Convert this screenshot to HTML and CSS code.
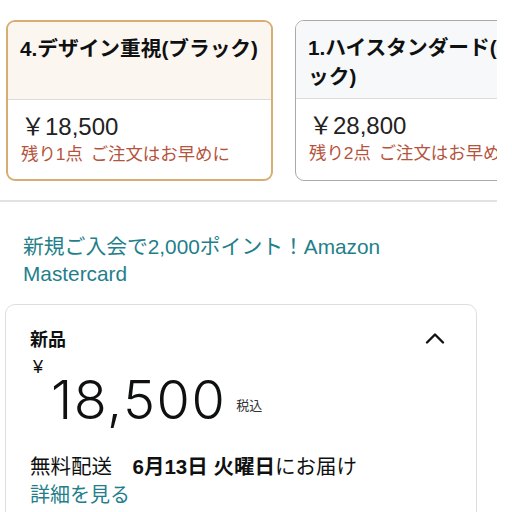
FILE: index.html
```html
<!DOCTYPE html>
<html lang="ja">
<head>
<meta charset="UTF-8" />
<meta name="viewport" content="width=device-width, initial-scale=1" />
<title>商品ページ</title>
<link rel="stylesheet" href="styles.css">
</head>
<body>

<div class="swatches">
  <div class="swatch selected">
    <div class="swatch-head">4.デザイン重視(ブラック)</div>
    <div class="swatch-body">
      <div class="swatch-price">￥18,500</div>
      <div class="stock">残り1点 ご注文はお早めに</div>
    </div>
  </div>
  <div class="swatch">
    <div class="swatch-head">1.ハイスタンダード(ブラック)</div>
    <div class="swatch-body">
      <div class="swatch-price">￥28,800</div>
      <div class="stock">残り2点 ご注文はお早めに</div>
    </div>
  </div>
</div>

<div class="divider"></div>

<a class="promo" href="#">新規ご入会で2,000ポイント！Amazon Mastercard</a>

<div class="buybox">
  <div class="buybox-head">
    <span class="condition">新品</span>
    <svg class="chevron" width="22" height="14" viewBox="0 0 22 14">
      <path d="M3 11.5 L11 3.5 L19 11.5" fill="none" stroke="#111" stroke-width="2.4" stroke-linecap="round" stroke-linejoin="round"/>
    </svg>
  </div>
  <div class="buybox-price">
    <span class="symbol">¥</span>
    <span class="whole">18,500</span>
    <span class="tax">税込</span>
  </div>
  <div class="delivery">無料配送　<b>6月13日 火曜日</b>にお届け</div>
  <a class="details" href="#">詳細を見る</a>
</div>

</body>
</html>
```

FILE: styles.css
```css
body {
  margin: 0;
  background: #fff;
  color: #0f1111;
  font-family: "Liberation Sans", "Noto Sans CJK JP", sans-serif;
}
a {
  text-decoration: none;
}

.swatches {
  display: flex;
  gap: 22px;
  width: 491px;
  padding: 20px 0 0 6px;
  overflow: hidden;
}
.swatch {
  flex: 0 0 267px;
  height: 161px;
  box-sizing: border-box;
  border: 1.5px solid #a9a9a9;
  border-radius: 9px;
  overflow: hidden;
  display: flex;
  flex-direction: column;
}
.swatch.selected {
  border: 2px solid #d8ad72;
}
.swatch-head {
  height: 78px;
  box-sizing: border-box;
  padding: 12px 12px 0 12px;
  background: #f7f8fa;
  border-bottom: 1.5px solid #dcdcdc;
  font-size: 20.7px;
  font-weight: 700;
  line-height: 29px;
}
.selected .swatch-head {
  background: #fcf6f1;
}
.swatch-body {
  padding: 12px 13px 0 13px;
}
.swatch-price {
  font-size: 24px;
  line-height: 30px;
  color: #222;
}
.stock {
  font-size: 17.4px;
  line-height: 24px;
  color: #b5543d;
  word-spacing: 3px;
}

.divider {
  width: 497px;
  height: 2px;
  margin-top: 19px;
  background: #e2e2e2;
}

.promo {
  display: block;
  margin: 31px 0 0 23px;
  width: 385px;
  font-size: 20.8px;
  line-height: 27px;
  color: #1f808b;
}

.buybox {
  margin: 17px 0 0 5px;
  width: 472px;
  height: 240px;
  box-sizing: border-box;
  border: 1.5px solid #dedede;
  border-radius: 10px;
  padding: 20px 28px 0 24px;
}
.buybox-head {
  display: flex;
  justify-content: space-between;
  align-items: center;
  padding-right: 2px;
}
.condition {
  font-size: 18px;
  font-weight: 700;
  font-family: "Noto Sans CJK JP", sans-serif;
}
.buybox-price {
  display: flex;
  align-items: flex-start;
  margin-top: 9px;
  height: 80px;
}
.symbol {
  font-size: 18px;
  margin: -3px 8px 0 3px;
}
.whole {
  font-family: Inter, Roboto, sans-serif;
  font-size: 54px;
  font-weight: 300;
  line-height: 80px;
  letter-spacing: 1.5px;
}
.tax {
  font-family: "Noto Sans CJK JP", sans-serif;
  font-size: 13px;
  margin: 35px 0 0 10px;
  color: #333;
}
.delivery {
  margin-top: 13px;
  font-size: 20.5px;
  line-height: 28px;
}
.delivery b {
  font-weight: 700;
}
.details {
  display: block;
  font-size: 20px;
  line-height: 28px;
  color: #1f808b;
}
```
